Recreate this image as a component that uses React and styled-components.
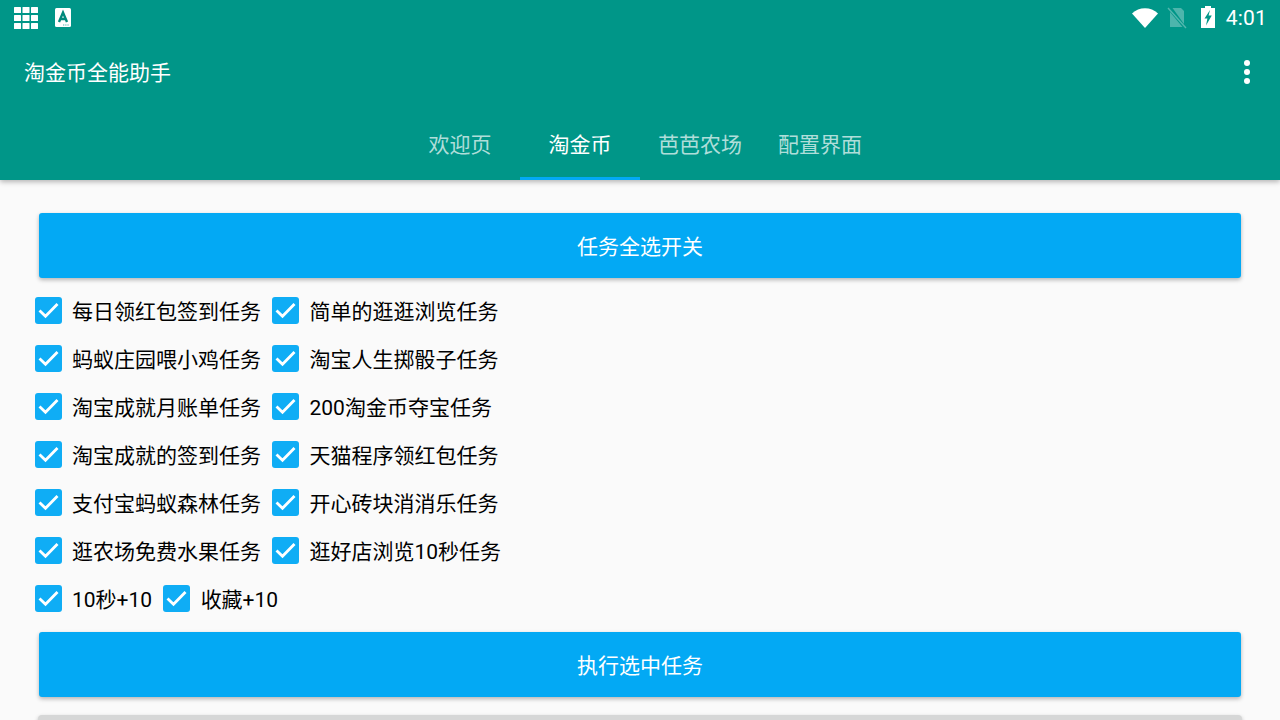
import React from "react";
import styled, { createGlobalStyle } from "styled-components";

const Global = createGlobalStyle`
  html, body { margin: 0; padding: 0; height: 720px; overflow: hidden; background: #fafafa; }
  body { font-family: Roboto, "Noto Sans CJK SC", "Noto Sans", sans-serif; }
  * { box-sizing: border-box; }
`;
const Page = styled.div`width: 1280px; height: 720px; overflow: hidden; background: #fafafa; display: flex; flex-direction: column;`;
const Header = styled.header`
  height: 180px; flex: none; background: #009688; color: #fff;
  box-shadow: 0 2px 5px rgba(0,0,0,.28); position: relative; z-index: 2;
  display: flex; flex-direction: column;
`;
const StatusBar = styled.div`height: 36px; display: flex; align-items: center; padding: 0 13px 0 14px;`;
const StatusLeft = styled.div`display: flex; align-items: center; gap: 16px; margin-top: -0.5px;`;
const StatusRight = styled.div`display: flex; align-items: center; margin-left: auto;`;
const Time = styled.span`font: 400 21px/36px Roboto, sans-serif; color: #fff; margin-left: 11px; letter-spacing: .2px;`;
const Toolbar = styled.div`height: 72px; display: flex; align-items: center; justify-content: space-between; padding: 0 30px 0 24px;`;
const Title = styled.div`font-size: 21px; line-height: 30px; margin-top: 2px;`;
const Tabs = styled.nav`height: 72px; display: flex; justify-content: center;`;
const Tab = styled.div`
  width: 120px; display: flex; align-items: center; justify-content: center;
  font-size: 21px; padding-top: 1px;
  color: ${p => (p.$active ? "#fff" : "rgba(255,255,255,.7)")};
  border-bottom: 3px solid ${p => (p.$active ? "#03a9f4" : "transparent")};
`;
const Content = styled.main`flex: 1; padding: 33px 39px 0; display: flex; flex-direction: column; overflow: hidden;`;
const Button = styled.div`
  height: 65px; flex: none; border-radius: 3px; display: flex; align-items: center; justify-content: center;
  background: ${p => (p.$muted ? "#d6d7d7" : "#03a9f4")}; color: #fff; font-size: 21px; padding-bottom: 1px;
  box-shadow: 0 2px 4px rgba(0,0,0,.28);
`;
const Rows = styled.div`margin: 10px 0 0 -5px; display: flex; flex-direction: column;`;
const Row = styled.div`height: 48px; display: flex; align-items: center;`;
const Item = styled.label`display: flex; align-items: center; margin-right: 10.5px;`;
const Box = styled.span`
  width: 27px; height: 27px; flex: none; border-radius: 3px; background: #0fadf5; margin: -3px 0 0 .5px;
  display: flex; align-items: center; justify-content: center;
`;
const Label = styled.span`font-size: 21px; line-height: 30px; color: #000; margin-left: 10.5px; white-space: nowrap;`;
const BottomButton = styled(Button)`margin-top: 8px;`;
const NextButton = styled(Button)`margin: 18px -1px 0; border-radius: 4px;`;
const WifiSvg = styled.svg`margin-top: -1px;`;
const SimSvg = styled.svg`margin-left: 9px;`;
const BatterySvg = styled.svg`margin: -2px 0 0 14px;`;

const Check = () => (
  <svg width="27" height="27" viewBox="0 0 27 27" fill="none">
    <path d="M4.5 13.5 L10.5 19.3 L22.5 7" stroke="#fff" strokeWidth="2.8" />
  </svg>
);
const GridIcon = () => (
  <svg width="25" height="22" viewBox="0 0 25 22" fill="#fff">
    {[0, 8.5, 17].map(x => [0, 8, 16].map(y => <rect key={`${x}-${y}`} x={x} y={y} width="7" height="6" rx=".5" />))}
  </svg>
);
const AppIcon = () => (
  <svg width="16" height="19" viewBox="0 0 16 19">
    <rect width="16" height="19" rx="1.5" fill="#fff" />
    <path d="M4 14 L8 4.5 L12 14 M5.5 11 H10.5" fill="none" stroke="#00897b" strokeWidth="2.4" />
    <path d="M8 17 h1.3 M10.2 17 h1.3 M12.4 17 h1.3" stroke="#4db6ac" strokeWidth="1.2" />
  </svg>
);
const WifiIcon = () => (
  <WifiSvg width="26" height="20" viewBox="0 0 26 20"><path d="M0 5.5 C7 -1.6 19 -1.6 26 5.5 L13 20 Z" fill="#fff" /></WifiSvg>
);
const SimIcon = () => (
  <SimSvg width="20" height="22" viewBox="0 0 20 22">
    <path d="M3 5 V20 H15.5 Z" fill="#fff" fillOpacity=".3" />
    <path d="M5.5 1 H14 L17 4 V17 Z" fill="#fff" fillOpacity=".3" />
    <path d="M1 1 L19 21" stroke="#fff" strokeOpacity=".32" strokeWidth="1.4" />
  </SimSvg>
);
const BatteryIcon = () => (
  <BatterySvg width="14" height="22" viewBox="0 0 14 22">
    <path d="M4 0 H10 V2 H14 V22 H0 V2 H4 Z" fill="#fff" />
    <path d="M9 4 L3.5 12.5 H6.4 L5 19.5 L10.8 9.6 H7.6 Z" fill="#009688" />
  </BatterySvg>
);
const MoreIcon = () => (
  <svg width="6" height="24" viewBox="0 0 6 24" fill="#fff">
    <circle cx="3" cy="3" r="3" /><circle cx="3" cy="12" r="3" /><circle cx="3" cy="21" r="3" />
  </svg>
);

const rows = [
  ["每日领红包签到任务", "简单的逛逛浏览任务"],
  ["蚂蚁庄园喂小鸡任务", "淘宝人生掷骰子任务"],
  ["淘宝成就月账单任务", "200淘金币夺宝任务"],
  ["淘宝成就的签到任务", "天猫程序领红包任务"],
  ["支付宝蚂蚁森林任务", "开心砖块消消乐任务"],
  ["逛农场免费水果任务", "逛好店浏览10秒任务"],
  ["10秒+10", "收藏+10"],
];

export default function App() {
  return (
    <Page>
      <Global />
      <Header>
        <StatusBar>
          <StatusLeft><GridIcon /><AppIcon /></StatusLeft>
          <StatusRight><WifiIcon /><SimIcon /><BatteryIcon /><Time>4:01</Time></StatusRight>
        </StatusBar>
        <Toolbar><Title>淘金币全能助手</Title><MoreIcon /></Toolbar>
        <Tabs>
          <Tab>欢迎页</Tab><Tab $active>淘金币</Tab><Tab>芭芭农场</Tab><Tab>配置界面</Tab>
        </Tabs>
      </Header>
      <Content>
        <Button>任务全选开关</Button>
        <Rows>
          {rows.map(r => (
            <Row key={r[0]}>
              {r.map(t => (
                <Item key={t}><Box><Check /></Box><Label>{t}</Label></Item>
              ))}
            </Row>
          ))}
        </Rows>
        <BottomButton>执行选中任务</BottomButton>
        <NextButton $muted />
      </Content>
    </Page>
  );
}
